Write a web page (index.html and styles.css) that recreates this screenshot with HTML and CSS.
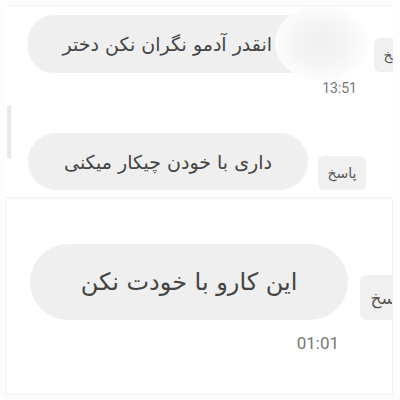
FILE: index.html
```html
<!DOCTYPE html>
<html>
<head>
    <title>Chat</title>
    <link rel="stylesheet" href="styles.css">
</head>
<body>
    <div class="shot shot-top">
        <div class="scroll-mark"></div>

        <div class="row row-one">
            <div class="bubble bubble-one">انقدر آدمو نگران نکن دختر</div>
            <div class="reply">پاسخ</div>
            <div class="blur"></div>
        </div>
        <div class="time time-one">13:51</div>

        <div class="row row-two">
            <div class="bubble bubble-two">داری با خودن چیکار میکنی</div>
            <div class="reply">پاسخ</div>
        </div>
    </div>

    <div class="shot shot-bottom">
        <div class="row row-three">
            <div class="bubble bubble-three">این کارو با خودت نکن</div>
            <div class="reply reply-big">پاسخ</div>
        </div>
        <div class="time time-three">01:01</div>
    </div>
</body>
</html>
```

FILE: styles.css
```css
body {
    margin: 0;
    width: 400px;
    height: 400px;
    overflow: hidden;
    background: #fdfdfd;
    font-family: "DejaVu Sans", "Noto Sans", sans-serif;
    color: #444;
}

.shot {
    position: relative;
    margin-left: 5px;
    width: 388px;
    background: #fff;
    overflow: hidden;
    box-sizing: border-box;
}

.shot-top {
    margin-top: 5px;
    height: 193px;
    border-top: 1px solid #f3f3f3;
    border-bottom: 1px solid #f0f0f0;
    padding: 9px 0 0 23px;
}

.shot-bottom {
    margin-top: 2px;
    height: 195px;
    border-left: 1px solid #f2f2f2;
    border-bottom: 1px solid #f2f2f2;
    border-right: 1px solid #f2f2f2;
    padding: 44px 0 0 24px;
}

.scroll-mark {
    position: absolute;
    left: 2px;
    top: 100px;
    width: 4px;
    height: 52px;
    background: #e9e9e9;
}

.row {
    position: relative;
    display: flex;
    align-items: flex-end;
    direction: ltr;
}

.bubble {
    flex: none;
    box-sizing: border-box;
    background: #efefef;
    direction: rtl;
    display: flex;
    align-items: center;
    justify-content: center;
    white-space: nowrap;
    font-size: 19px;
}

.bubble-one {
    width: 337px;
    height: 58px;
    border-radius: 26px;
    justify-content: flex-start;
    padding-right: 93px;
}

.bubble-two {
    width: 280px;
    height: 57px;
    border-radius: 28px;
    margin-top: 37px;
}

.bubble-three {
    width: 318px;
    height: 76px;
    border-radius: 38px;
    font-size: 24px;
}

.reply {
    flex: none;
    width: 48px;
    height: 34px;
    margin-left: 9px;
    margin-bottom: 1px;
    background: #f0f0f0;
    border-radius: 6px;
    direction: rtl;
    display: flex;
    align-items: center;
    justify-content: center;
    font-size: 14px;
    color: #555;
}

.row-two .reply {
    margin-left: 10px;
    margin-bottom: 0;
}

.reply-big {
    width: 56px;
    height: 45px;
    margin-left: 12px;
    margin-bottom: 0;
    font-size: 17px;
}

.blur {
    position: absolute;
    left: 247px;
    top: -10px;
    width: 92px;
    height: 76px;
    border-radius: 50%;
    background: radial-gradient(ellipse at center, #efefef 0%, #f5f5f5 40%, #fcfcfc 68%, rgba(255,255,255,0) 100%);
}

.time {
    font-family: Roboto, "Liberation Sans", sans-serif;
    color: #777;
    text-align: right;
}

.time-one {
    font-size: 14px;
    line-height: 16px;
    margin-top: 7px;
    width: 329px;
}

.time-three {
    font-size: 17px;
    line-height: 20px;
    margin-top: 13px;
    width: 309px;
}
```
